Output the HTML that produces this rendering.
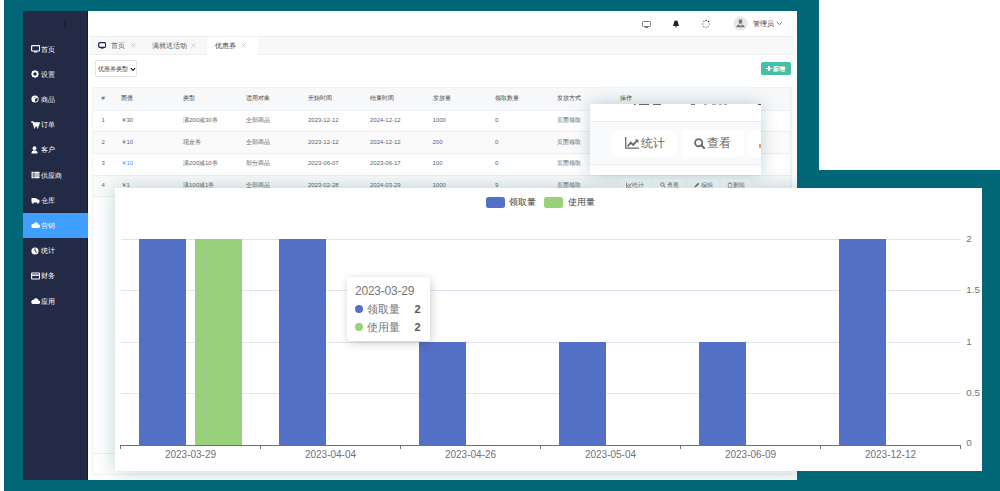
<!DOCTYPE html><html><head><meta charset="utf-8"><style>
*{box-sizing:border-box;margin:0;padding:0}
html,body{width:1000px;height:491px;overflow:hidden;background:#fff;font-family:"Liberation Sans",sans-serif}
.a{position:absolute}
.teal{background:#016676}
.mi{position:absolute;left:23px;width:65px;height:25px;color:#fff;font-size:7px;line-height:25px}
.mi .tx{position:absolute;left:18.3px;top:0;white-space:nowrap;font-weight:normal;font-size:7.2px}
.mi.on{background:#409eff}
.t6{position:absolute;font-size:6px;color:#606266;white-space:nowrap;line-height:8px}
.t7{position:absolute;font-size:7px;color:#606266;white-space:nowrap;line-height:8px}
.lbl{position:absolute;font-size:10px;color:#6e7079;white-space:nowrap;line-height:12px}
.hl{position:absolute;height:1px;background:#efefef}
.btn{position:absolute;border:none;border-radius:1.5px;background:rgba(255,255,255,0.75);font-size:6px;color:#606266;line-height:8px;white-space:nowrap}
</style></head><body>
<div class="a teal" style="left:4px;top:0;width:815px;height:491px"></div>
<div class="a teal" style="left:797px;top:170px;width:203px;height:321px"></div>
<div class="a" style="left:23px;top:11px;width:65px;height:469px;background:#222a45"></div>
<div class="a" style="left:87px;top:11px;width:1px;height:469px;background:#161b2c"></div>
<div class="a" style="left:63.5px;top:21px;width:2px;height:6px;background:#1c2236"></div>
<div class="mi" style="top:36.5px"><svg class="a" style="left:7.5px;top:8.5px" width="9.5" height="8" viewBox="0 0 9.5 8"><rect x="0.6" y="0.6" width="8" height="5.4" rx="0.8" fill="none" stroke="#fff" stroke-width="1.2"/><path d="M2.5 6.2h4.2l-0.6 1.3h-3z" fill="#fff"/></svg><div class="tx">首页</div></div>
<div class="mi" style="top:61.7px"><svg class="a" style="left:7.5px;top:8.5px" width="9.5" height="8" viewBox="0 0 9.5 8"><circle cx="4" cy="4" r="2.6" fill="none" stroke="#fff" stroke-width="1.7"/><path d="M4 0.3v1.4M4 6.3v1.4M0.3 4h1.4M6.3 4h1.4M1.4 1.4l1 1M5.6 5.6l1 1M6.6 1.4l-1 1M1.4 6.6l1-1" stroke="#fff" stroke-width="1.2"/></svg><div class="tx">设置</div></div>
<div class="mi" style="top:86.9px"><svg class="a" style="left:7.5px;top:8.5px" width="9.5" height="8" viewBox="0 0 9.5 8"><circle cx="4" cy="4" r="3.6" fill="#fff"/><path d="M4 4l2.6-1.5v3L4 7z" fill="#222a45"/><path d="M4 4L1.6 2.6 4 1.2l2.4 1.4z" fill="#cfd3dc"/></svg><div class="tx">商品</div></div>
<div class="mi" style="top:112.1px"><svg class="a" style="left:7.5px;top:8.5px" width="9.5" height="8" viewBox="0 0 9.5 8"><path d="M0.3 1h1.6l1.3 4.2h4l1-3.2H2.6" fill="none" stroke="#fff" stroke-width="1.3"/><path d="M2.6 2h5.6l-0.9 3H3.4z" fill="#fff"/><circle cx="3.5" cy="6.8" r="0.8" fill="#fff"/><circle cx="6.6" cy="6.8" r="0.8" fill="#fff"/></svg><div class="tx">订单</div></div>
<div class="mi" style="top:137.3px"><svg class="a" style="left:7.5px;top:8.5px" width="9.5" height="8" viewBox="0 0 9.5 8"><circle cx="3.5" cy="2.2" r="1.9" fill="#fff"/><path d="M0.4 7.6c0-2.6 1.3-3.4 3.1-3.4s3.1 0.8 3.1 3.4z" fill="#fff"/></svg><div class="tx">客户</div></div>
<div class="mi" style="top:162.5px"><svg class="a" style="left:7.5px;top:8.5px" width="9.5" height="8" viewBox="0 0 9.5 8"><rect x="0.5" y="0.8" width="8" height="6.4" fill="#fff"/><path d="M0.5 3h8M0.5 5h8M3 1v6" stroke="#222a45" stroke-width="0.6"/></svg><div class="tx">供应商</div></div>
<div class="mi" style="top:187.7px"><svg class="a" style="left:7.5px;top:8.5px" width="9.5" height="8" viewBox="0 0 9.5 8"><path d="M0.5 2h5v4.5h-5z M5.5 3.2h1.8l1.3 1.5v1.8h-3.1z" fill="#fff"/><circle cx="2" cy="6.8" r="0.9" fill="#fff"/><circle cx="6.8" cy="6.8" r="0.9" fill="#fff"/></svg><div class="tx">仓库</div></div>
<div class="mi on" style="top:212.9px"><svg class="a" style="left:7.5px;top:8.5px" width="9.5" height="8" viewBox="0 0 9.5 8"><path d="M2 7h5.2a1.8 1.8 0 0 0 0.3-3.6A2.4 2.4 0 0 0 2.9 2.8 2.1 2.1 0 0 0 2 7z" fill="#fff"/></svg><div class="tx">营销</div></div>
<div class="mi" style="top:238.1px"><svg class="a" style="left:7.5px;top:8.5px" width="9.5" height="8" viewBox="0 0 9.5 8"><circle cx="4" cy="4" r="3.6" fill="#fff"/><path d="M4 1.2V4l2.2 1.4" fill="none" stroke="#222a45" stroke-width="0.9"/></svg><div class="tx">统计</div></div>
<div class="mi" style="top:263.3px"><svg class="a" style="left:7.5px;top:8.5px" width="9.5" height="8" viewBox="0 0 9.5 8"><rect x="0.6" y="1" width="8" height="6" rx="0.6" fill="none" stroke="#fff" stroke-width="1.1"/><path d="M0.6 3.2h8" stroke="#fff" stroke-width="1.4"/></svg><div class="tx">财务</div></div>
<div class="mi" style="top:288.5px"><svg class="a" style="left:7.5px;top:8.5px" width="9.5" height="8" viewBox="0 0 9.5 8"><path d="M2 7h5.2a1.8 1.8 0 0 0 0.3-3.6A2.4 2.4 0 0 0 2.9 2.8 2.1 2.1 0 0 0 2 7z" fill="#fff"/></svg><div class="tx">应用</div></div>
<div class="a" style="left:88px;top:11px;width:709px;height:469px;background:#fff"></div>
<svg class="a" style="left:641.5px;top:20.5px" width="9" height="7" viewBox="0 0 9 7"><rect x="0.5" y="0.5" width="8" height="5" rx="1" fill="none" stroke="#5a5a6a" stroke-width="0.8"/><path d="M2.8 6.5h3.4" stroke="#5a5a6a" stroke-width="0.8"/></svg>
<svg class="a" style="left:672px;top:20px" width="8" height="8" viewBox="0 0 8 8"><path d="M4 0.5C2.3 0.5 1.8 2 1.8 3.5L1 6h6L6.2 3.5C6.2 2 5.7 0.5 4 0.5z M3 6.5a1 1 0 0 0 2 0z" fill="#222"/></svg>
<svg class="a" style="left:700.8px;top:18.6px" width="10" height="10" viewBox="0 0 10 10"><circle cx="8.40" cy="5.00" r="0.75" fill="#888"/><circle cx="7.40" cy="7.40" r="0.75" fill="#888"/><circle cx="5.00" cy="8.40" r="0.75" fill="#888"/><circle cx="2.60" cy="7.40" r="0.75" fill="#888"/><circle cx="1.60" cy="5.00" r="0.75" fill="#888"/><circle cx="2.60" cy="2.60" r="0.75" fill="#888"/><circle cx="5.00" cy="1.60" r="0.75" fill="#333"/><circle cx="7.40" cy="2.60" r="0.75" fill="#333"/></svg>
<div class="a" style="left:732.8px;top:16.4px;width:15px;height:15px;border-radius:50%;background:#e8e8e8;border:1px solid #f0f0f0"></div>
<svg class="a" style="left:732.8px;top:16.4px" width="15" height="15" viewBox="0 0 15 15"><ellipse cx="7.5" cy="5.6" rx="1.9" ry="2.4" fill="#7a7a7a"/><path d="M3.2 11.2c0.4-1.6 1.6-2.4 3-2.6l1.3 1.6 1.3-1.6c1.4 0.2 2.6 1 3 2.6z" fill="#7a7a7a"/></svg>
<div class="t7" style="left:753px;top:20px;color:#333">管理员</div>
<svg class="a" style="left:776px;top:21px" width="7" height="5" viewBox="0 0 7 5"><path d="M0.8 1l2.7 2.7L6.2 1" fill="none" stroke="#555" stroke-width="0.8"/></svg>
<div class="a" style="left:90px;top:36px;width:704px;height:19px;background:#f8f8f8;border-top:1px solid #eeeeee;border-bottom:1px solid #eeeeee"></div>
<div class="a" style="left:207px;top:36px;width:51px;height:19px;background:#fff;border-top:1px solid #ececec"></div>
<svg class="a" style="left:97.8px;top:42px" width="8.4" height="7.2" viewBox="0 0 8.4 7.2"><rect x="0.7" y="0.7" width="7" height="4.6" rx="1.2" fill="none" stroke="#1f2d4d" stroke-width="1.3"/><path d="M2.6 5.6h3.2l-0.5 1.1H3.1z" fill="#1f2d4d"/></svg>
<div class="t7" style="left:110.5px;top:41.5px;color:#555;font-size:6.6px">首页</div>
<div class="t7" style="left:152px;top:41.5px;color:#555;font-size:6.6px">满就送活动</div>
<div class="t7" style="left:215px;top:41.5px;color:#333;font-size:6.6px">优惠券</div>
<svg class="a" style="left:131px;top:42.5px" width="5" height="5" viewBox="0 0 5 5"><path d="M0.5 0.5l4 4M4.5 0.5l-4 4" stroke="#bbb" stroke-width="0.7"/></svg>
<svg class="a" style="left:191px;top:42.5px" width="5" height="5" viewBox="0 0 5 5"><path d="M0.5 0.5l4 4M4.5 0.5l-4 4" stroke="#bbb" stroke-width="0.7"/></svg>
<svg class="a" style="left:241px;top:42.5px" width="5" height="5" viewBox="0 0 5 5"><path d="M0.5 0.5l4 4M4.5 0.5l-4 4" stroke="#bbb" stroke-width="0.7"/></svg>
<div class="a" style="left:95px;top:60.3px;width:42.3px;height:17px;border:0.5px solid #e2e4e8;border-radius:2px;background:#fff"></div>
<div class="t6" style="left:97.5px;top:65px;color:#333">优惠券类型</div>
<svg class="a" style="left:129.5px;top:66.5px" width="6" height="5" viewBox="0 0 6 5"><path d="M0.8 1l2.2 2.4L5.2 1" fill="none" stroke="#111" stroke-width="1.1"/></svg>
<div class="a" style="left:760.5px;top:62px;width:30.5px;height:13.2px;border-radius:1.8px;background:#45bfa7"></div>
<div class="a" style="left:766.3px;top:67.8px;width:5.5px;height:1.6px;background:#fff"></div>
<div class="a" style="left:768.3px;top:65.8px;width:1.6px;height:5.5px;background:#fff"></div>
<div class="t6" style="left:772.5px;top:64.8px;color:#fff;font-weight:bold">新增</div>
<div class="a" style="left:92px;top:87px;width:699.5px;height:388px;border:1px solid #f3f3f3;border-top:none"></div>
<div class="a" style="left:92.5px;top:87.5px;width:698px;height:22px;background:#f6f8fa"></div>
<div class="t6" style="left:101.5px;top:94px;color:#444">#</div>
<div class="t6" style="left:120.5px;top:94px;color:#444">面值</div>
<div class="t6" style="left:183px;top:94px;color:#444">类型</div>
<div class="t6" style="left:245.5px;top:94px;color:#444">适用对象</div>
<div class="t6" style="left:308px;top:94px;color:#444">开始时间</div>
<div class="t6" style="left:370px;top:94px;color:#444">结束时间</div>
<div class="t6" style="left:432.5px;top:94px;color:#444">发放量</div>
<div class="t6" style="left:495px;top:94px;color:#444">领取数量</div>
<div class="t6" style="left:557px;top:94px;color:#444">发放方式</div>
<div class="t6" style="left:620px;top:94px;color:#444">操作</div>
<div class="a" style="left:92.5px;top:109.5px;width:698px;height:21.5px;background:#fff;border-top:1px solid #ebeef5"></div>
<div class="t6" style="left:101.5px;top:116.0px;color:#606266">1</div>
<div class="t6" style="left:120.5px;top:116.0px;color:#606266">￥30</div>
<div class="t6" style="left:183px;top:116.0px;color:#606266">满200减30券</div>
<div class="t6" style="left:245.5px;top:116.0px;color:#606266">全部商品</div>
<div class="t6" style="left:308px;top:116.0px;color:#606266">2023-12-12</div>
<div class="t6" style="left:370px;top:116.0px;color:#606266">2024-12-12</div>
<div class="t6" style="left:432.5px;top:116.0px;color:#606266">1000</div>
<div class="t6" style="left:495px;top:116.0px;color:#606266">0</div>
<div class="t6" style="left:557px;top:116.0px;color:#606266">页面领取</div>
<div class="a" style="left:92.5px;top:131px;width:698px;height:21.5px;background:#fafafa;border-top:1px solid #ebeef5"></div>
<div class="t6" style="left:101.5px;top:137.5px;color:#606266">2</div>
<div class="t6" style="left:120.5px;top:137.5px;color:#606266">￥10</div>
<div class="t6" style="left:183px;top:137.5px;color:#606266">现金券</div>
<div class="t6" style="left:245.5px;top:137.5px;color:#606266">全部商品</div>
<div class="t6" style="left:308px;top:137.5px;color:#606266">2023-12-12</div>
<div class="t6" style="left:370px;top:137.5px;color:#606266">2024-12-12</div>
<div class="t6" style="left:432.5px;top:137.5px;color:#606266">200</div>
<div class="t6" style="left:495px;top:137.5px;color:#606266">0</div>
<div class="t6" style="left:557px;top:137.5px;color:#606266">页面领取</div>
<div class="a" style="left:92.5px;top:152.5px;width:698px;height:21.5px;background:#fff;border-top:1px solid #ebeef5"></div>
<div class="t6" style="left:101.5px;top:159.0px;color:#606266">3</div>
<div class="t6" style="left:120.5px;top:159.0px;color:#409eff">￥10</div>
<div class="t6" style="left:183px;top:159.0px;color:#606266">满200减10券</div>
<div class="t6" style="left:245.5px;top:159.0px;color:#606266">部分商品</div>
<div class="t6" style="left:308px;top:159.0px;color:#606266">2023-06-07</div>
<div class="t6" style="left:370px;top:159.0px;color:#606266">2023-06-17</div>
<div class="t6" style="left:432.5px;top:159.0px;color:#606266">100</div>
<div class="t6" style="left:495px;top:159.0px;color:#606266">0</div>
<div class="t6" style="left:557px;top:159.0px;color:#606266">页面领取</div>
<div class="a" style="left:92.5px;top:174.5px;width:698px;height:21.5px;background:#fafafa;border-top:1px solid #ebeef5"></div>
<div class="t6" style="left:101.5px;top:181.0px;color:#606266">4</div>
<div class="t6" style="left:120.5px;top:181.0px;color:#606266">￥1</div>
<div class="t6" style="left:183px;top:181.0px;color:#606266">满100减1券</div>
<div class="t6" style="left:245.5px;top:181.0px;color:#606266">全部商品</div>
<div class="t6" style="left:308px;top:181.0px;color:#606266">2023-02-28</div>
<div class="t6" style="left:370px;top:181.0px;color:#606266">2024-03-29</div>
<div class="t6" style="left:432.5px;top:181.0px;color:#606266">1000</div>
<div class="t6" style="left:495px;top:181.0px;color:#606266">9</div>
<div class="t6" style="left:557px;top:181.0px;color:#606266">页面领取</div>
<div class="hl" style="left:92.5px;top:195.5px;width:698px"></div>
<div class="a" style="left:790px;top:87.5px;width:1px;height:109px;background:#efefef"></div>
<div class="a" style="left:92.5px;top:87px;width:698px;height:1px;background:#f2f2f2"></div>
<div class="hl" style="left:92.5px;top:453px;width:698px"></div>
<div class="btn" style="left:619.5px;top:178.6px;width:32.7px;height:14px"><span style="position:absolute;left:12.5px;top:2.5px;color:#777">统计</span><svg style="position:absolute;left:6px;top:3.8px" width="6" height="6" viewBox="0 0 6 6"><path d="M0.4 0.5v4.6h5.2" fill="none" stroke="#666" stroke-width="0.7"/><path d="M1.2 4.2l1.5-1.8 1.1 1 1.8-2.2" fill="none" stroke="#666" stroke-width="0.8"/></svg></div>
<div class="btn" style="left:654.4px;top:178.6px;width:30.2px;height:14px"><span style="position:absolute;left:12.5px;top:2.5px;color:#777">查看</span><svg style="position:absolute;left:6px;top:3.8px" width="6" height="6" viewBox="0 0 6 6"><circle cx="2.4" cy="2.4" r="1.7" fill="none" stroke="#666" stroke-width="0.8"/><path d="M3.6 3.6l1.6 1.6" stroke="#666" stroke-width="0.9"/></svg></div>
<div class="btn" style="left:688.2px;top:178.6px;width:30.6px;height:14px"><span style="position:absolute;left:12.5px;top:2.5px;color:#777">编辑</span><svg style="position:absolute;left:6px;top:3.8px" width="6" height="6" viewBox="0 0 6 6"><path d="M0.6 5.4l0.3-1.4 3.2-3.2 1.1 1.1-3.2 3.2z" fill="#666"/></svg></div>
<div class="btn" style="left:720.6px;top:178.6px;width:30.6px;height:14px"><span style="position:absolute;left:12.5px;top:2.5px;color:#777">删除</span><svg style="position:absolute;left:6px;top:3.8px" width="6" height="6" viewBox="0 0 6 6"><path d="M0.8 1.6h4.4M2 1.6v-0.8h2v0.8M1.3 2v3.4h3.4V2" fill="none" stroke="#777" stroke-width="0.6"/></svg></div>
<div class="a" style="left:23px;top:11px;width:774px;height:469px;overflow:hidden"><div class="a" style="left:566.6px;top:93px;width:171.2px;height:71px;background:#fff;box-shadow:0 0 16px rgba(0,85,100,0.26)"></div><div class="a" style="left:92px;top:177px;width:867px;height:283px;background:#fff;box-shadow:0 0 20px rgba(0,85,100,0.26)"></div></div>
<div class="a" style="left:589.6px;top:104px;width:171.2px;height:71px;background:#fff"></div>
<div class="a" style="left:589.6px;top:121px;width:171.2px;height:43.5px;background:#f9fafb;border-top:1px solid #e9ecef;border-bottom:1px solid #e9ecef"></div>
<div class="a" style="left:611.8px;top:129.8px;width:65.7px;height:27.2px;background:#fff;border-radius:3px"></div>
<div class="a" style="left:680.8px;top:129.8px;width:63.2px;height:27.2px;background:#fff;border-radius:3px"></div>
<div class="a" style="left:748.2px;top:129.8px;width:12.6px;height:27.2px;background:#fff;border-radius:3px"></div>
<svg class="a" style="left:624.5px;top:137px" width="14" height="12" viewBox="0 0 14 12"><path d="M0.7 0v11.1h13.3" fill="none" stroke="#6a6a6a" stroke-width="1.3"/><path d="M2.6 9.3l3.2-3.6 2.5 2.2 3.3-3.9" fill="none" stroke="#6a6a6a" stroke-width="1.9"/><path d="M9.8 2.6h3.6v3.6z" fill="#6a6a6a"/></svg>
<div class="a" style="left:641.2px;top:134.8px;font-size:11.8px;line-height:16px;color:#666;white-space:nowrap">统计</div>
<svg class="a" style="left:693.6px;top:137.8px" width="12" height="11" viewBox="0 0 12 11"><circle cx="4.7" cy="4.7" r="3.6" fill="none" stroke="#6a6a6a" stroke-width="1.8"/><path d="M7.3 7.3l3.5 3.4" stroke="#6a6a6a" stroke-width="2"/></svg>
<div class="a" style="left:707.3px;top:134.8px;font-size:11.8px;line-height:16px;color:#666;white-space:nowrap">查看</div>
<div class="a" style="left:759.3px;top:144.3px;width:1.5px;height:3.5px;background:#e8a060"></div>
<div class="a" style="left:758px;top:104px;width:3px;height:1.3px;background:#555"></div>
<div class="a" style="left:633.5px;top:104px;width:2.5px;height:1.3px;background:#777"></div>
<div class="a" style="left:638.7px;top:104px;width:10.5px;height:1.3px;background:#666"></div>
<div class="a" style="left:653px;top:104px;width:7.5px;height:1.3px;background:#666"></div>
<div class="a" style="left:691.2px;top:104px;width:3.8px;height:1.3px;background:#777"></div>
<div class="a" style="left:704px;top:104px;width:3px;height:1.3px;background:#aaa"></div>
<div class="a" style="left:712px;top:104px;width:4px;height:1.3px;background:#aaa"></div>
<div class="a" style="left:719px;top:104px;width:3px;height:1.3px;background:#aaa"></div>
<div class="a" style="left:724px;top:104px;width:3px;height:1.3px;background:#aaa"></div>
<div class="a" style="left:115px;top:188px;width:867px;height:283px;background:#fff"></div>
<div class="a" style="left:486.2px;top:197px;width:19px;height:11px;border-radius:2.5px;background:#5470c6"></div>
<div class="a" style="left:509.3px;top:197px;font-size:9.2px;line-height:11px;color:#444;white-space:nowrap">领取量</div>
<div class="a" style="left:544.3px;top:197px;width:19px;height:11px;border-radius:2.5px;background:#98d17a"></div>
<div class="a" style="left:567.5px;top:197px;font-size:9.2px;line-height:11px;color:#444;white-space:nowrap">使用量</div>
<div class="a" style="left:120.5px;top:239px;width:840px;height:1px;background:#e0e6f1"></div>
<div class="a" style="left:120.5px;top:290px;width:840px;height:1px;background:#e0e6f1"></div>
<div class="a" style="left:120.5px;top:342px;width:840px;height:1px;background:#e0e6f1"></div>
<div class="a" style="left:120.5px;top:393px;width:840px;height:1px;background:#e0e6f1"></div>
<div class="a" style="left:139.4px;top:239px;width:46.6px;height:206px;background:#5470c6"></div>
<div class="a" style="left:195.0px;top:239px;width:46.8px;height:206px;background:#98d17a"></div>
<div class="a" style="left:279.4px;top:239px;width:46.6px;height:206px;background:#5470c6"></div>
<div class="a" style="left:419.4px;top:342px;width:46.6px;height:103px;background:#5470c6"></div>
<div class="a" style="left:559.4px;top:342px;width:46.6px;height:103px;background:#5470c6"></div>
<div class="a" style="left:699.4px;top:342px;width:46.6px;height:103px;background:#5470c6"></div>
<div class="a" style="left:839.4px;top:239px;width:46.6px;height:206px;background:#5470c6"></div>
<svg class="a" style="left:205px;top:239px" width="4" height="206" viewBox="0 0 4 206"><line x1="2" y1="0" x2="2" y2="206" stroke="#b0b6c0" stroke-opacity="0.8" stroke-width="1.4" stroke-dasharray="2.9 1.6" stroke-dashoffset="2"/></svg>
<div class="a" style="left:120px;top:445px;width:841px;height:1px;background:#6e7079"></div>
<div class="a" style="left:120.0px;top:445px;width:1px;height:4px;background:#6e7079"></div>
<div class="a" style="left:260.0px;top:445px;width:1px;height:4px;background:#6e7079"></div>
<div class="a" style="left:400.0px;top:445px;width:1px;height:4px;background:#6e7079"></div>
<div class="a" style="left:540.0px;top:445px;width:1px;height:4px;background:#6e7079"></div>
<div class="a" style="left:680.0px;top:445px;width:1px;height:4px;background:#6e7079"></div>
<div class="a" style="left:820.0px;top:445px;width:1px;height:4px;background:#6e7079"></div>
<div class="a" style="left:960.0px;top:445px;width:1px;height:4px;background:#6e7079"></div>
<div class="lbl" style="left:150.5px;top:448.5px;width:80px;text-align:center">2023-03-29</div>
<div class="lbl" style="left:290.5px;top:448.5px;width:80px;text-align:center">2023-04-04</div>
<div class="lbl" style="left:430.5px;top:448.5px;width:80px;text-align:center">2023-04-26</div>
<div class="lbl" style="left:570.5px;top:448.5px;width:80px;text-align:center">2023-05-04</div>
<div class="lbl" style="left:710.5px;top:448.5px;width:80px;text-align:center">2023-06-09</div>
<div class="lbl" style="left:850.5px;top:448.5px;width:80px;text-align:center">2023-12-12</div>
<div class="lbl" style="left:966.3px;top:232.5px;font-size:9.8px">2</div>
<div class="lbl" style="left:966.3px;top:283.5px;font-size:9.8px">1.5</div>
<div class="lbl" style="left:966.3px;top:335.5px;font-size:9.8px">1</div>
<div class="lbl" style="left:966.3px;top:386.5px;font-size:9.8px">0.5</div>
<div class="lbl" style="left:966.3px;top:437.2px;font-size:9.8px">0</div>
<div class="a" style="left:347px;top:277px;width:83px;height:64px;background:#fff;border-radius:4px;box-shadow:1px 2px 10px rgba(0,0,0,0.2)"></div>
<div class="a" style="left:355px;top:283.6px;font-size:12px;letter-spacing:-0.22px;line-height:14px;color:#777;white-space:nowrap">2023-03-29</div>
<div class="a" style="left:355px;top:305.3px;width:7.8px;height:7.8px;border-radius:50%;background:#5470c6"></div>
<div class="a" style="left:355px;top:323.1px;width:7.8px;height:7.8px;border-radius:50%;background:#98d17a"></div>
<div class="a" style="left:367.2px;top:302.5px;font-size:10.7px;line-height:13px;color:#777;white-space:nowrap">领取量</div>
<div class="a" style="left:367.2px;top:320.5px;font-size:10.7px;line-height:13px;color:#777;white-space:nowrap">使用量</div>
<div class="a" style="left:414.5px;top:302.5px;font-size:11px;line-height:13px;color:#555;font-weight:bold">2</div>
<div class="a" style="left:414.5px;top:320.5px;font-size:11px;line-height:13px;color:#555;font-weight:bold">2</div>
</body></html>
